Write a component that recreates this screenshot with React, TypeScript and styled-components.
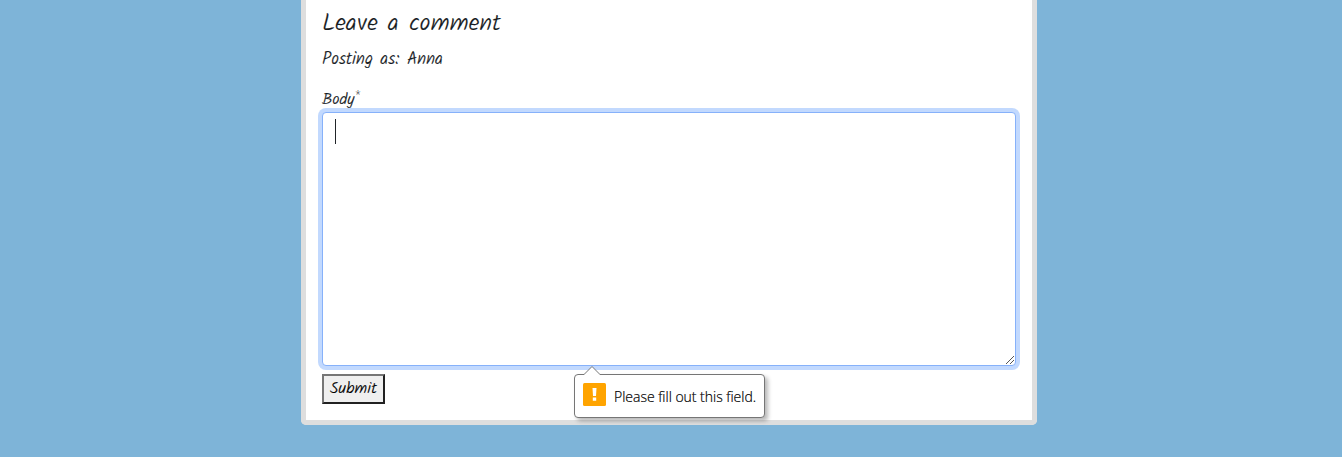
import React from 'react';
import styled, { createGlobalStyle } from 'styled-components';

const GlobalStyle = createGlobalStyle`
  *, *::before, *::after { box-sizing: border-box; }
  html, body { margin: 0; height: 457px; overflow: hidden; }
  body {
    background: #7eb4d8;
    color: #15191d;
    font: normal 300 16px/24px Kalam, Lato, sans-serif;
    -webkit-text-stroke: 0.2px;
  }
`;

const Card = styled.main`
  display: flex;
  flex-direction: column;
  align-items: flex-start;
  width: 736px;
  height: 425px;
  margin-left: 301px;
  padding: 9px 16px 16px;
  background: #fff;
  border: 5px solid #dedede;
  border-top: 0;
  border-radius: 0 0 5px 5px;
`;

const Title = styled.h3`
  margin: 0;
  font-size: 24px;
  font-weight: 300;
  line-height: 29px;
  letter-spacing: 0.28px;
  white-space: nowrap;
`;

const Author = styled.p`
  margin: 10px 0 0;
  font-size: 17px;
  line-height: 24px;
  letter-spacing: 0.1px;
  word-spacing: 0.4px;
  white-space: nowrap;
`;

const Label = styled.label`
  display: flex;
  margin-top: 16px;
  height: 24px;
  font-size: 16px;
  line-height: 24px;
`;

const Required = styled.span`
  font: 300 10px/13px "Open Sans", sans-serif;
  -webkit-text-stroke: 0;
  margin-left: 1px;
`;

const Field = styled.div`
  position: relative;
  width: 694px;
  height: 254px;
  padding: 6px 12px;
  background: #fff;
  border: 1px solid #86b1fa;
  border-radius: 4px;
  box-shadow: 0 0 0 4px #c2d9fe;
`;

const Caret = styled.div`
  width: 1px;
  height: 25px;
  background: #212529;
`;

const Grip = styled.svg`
  position: absolute;
  right: 0;
  bottom: 0;
`;

const Submit = styled.button`
  width: 63px;
  height: 30px;
  margin-top: 8px;
  padding: 0;
  font: inherit;
  line-height: 24px;
  letter-spacing: 0.2px;
  color: #000;
  background: #efefef;
  border: 2px solid;
  border-color: #767676 #212121 #212121 #767676;
`;

const Bubble = styled.div`
  position: absolute;
  left: 251px;
  top: 261px;
  display: flex;
  align-items: center;
  gap: 8px;
  width: 191px;
  height: 44px;
  padding: 0 8px;
  background: #fff;
  border: 1px solid #767676;
  border-radius: 4px;
  box-shadow: 3px 3px 4px rgba(0, 0, 0, 0.28);
`;

const Pointer = styled.svg`
  position: absolute;
  left: 8px;
  top: -9px;
`;

const WarningIcon = styled.svg`
  flex: none;
  margin-top: -3px;
`;

const Message = styled.span`
  font: normal 300 14px/20px "Segoe UI", "Open Sans", sans-serif;
  letter-spacing: -0.02px;
  -webkit-text-stroke: 0.2px;
  margin-top: 1px;
  color: #000;
  white-space: nowrap;
`;

export default function App() {
  return (
    <>
      <GlobalStyle />
      <Card>
        <Title>Leave a comment</Title>
        <Author>Posting as: Anna</Author>
        <Label>Body<Required>*</Required></Label>
        <Field>
          <Caret />
          <Grip width="10" height="10" viewBox="0 0 10 10" shapeRendering="crispEdges">
            <path d="M1 9L9 1M5 9L9 5" stroke="#555" fill="none" />
          </Grip>
          <Bubble role="alert">
            <Pointer width="18" height="10" viewBox="0 0 18 10">
              <path d="M1 8.5L9 .5L17 8.5V10H1Z" fill="#fff" />
              <path d="M1 8.5L9 .5L17 8.5" fill="none" stroke="#767676" />
            </Pointer>
            <WarningIcon width="23" height="23" viewBox="0 0 23 23">
              <rect width="23" height="23" rx="1.5" fill="#ffa400" />
              <path d="M9.5 5H13.5L13 13H10ZM9.8 14.6H13.2V17.8H9.8Z" fill="#fff" />
            </WarningIcon>
            <Message>Please fill out this field.</Message>
          </Bubble>
        </Field>
        <Submit type="button">Submit</Submit>
      </Card>
    </>
  );
}
